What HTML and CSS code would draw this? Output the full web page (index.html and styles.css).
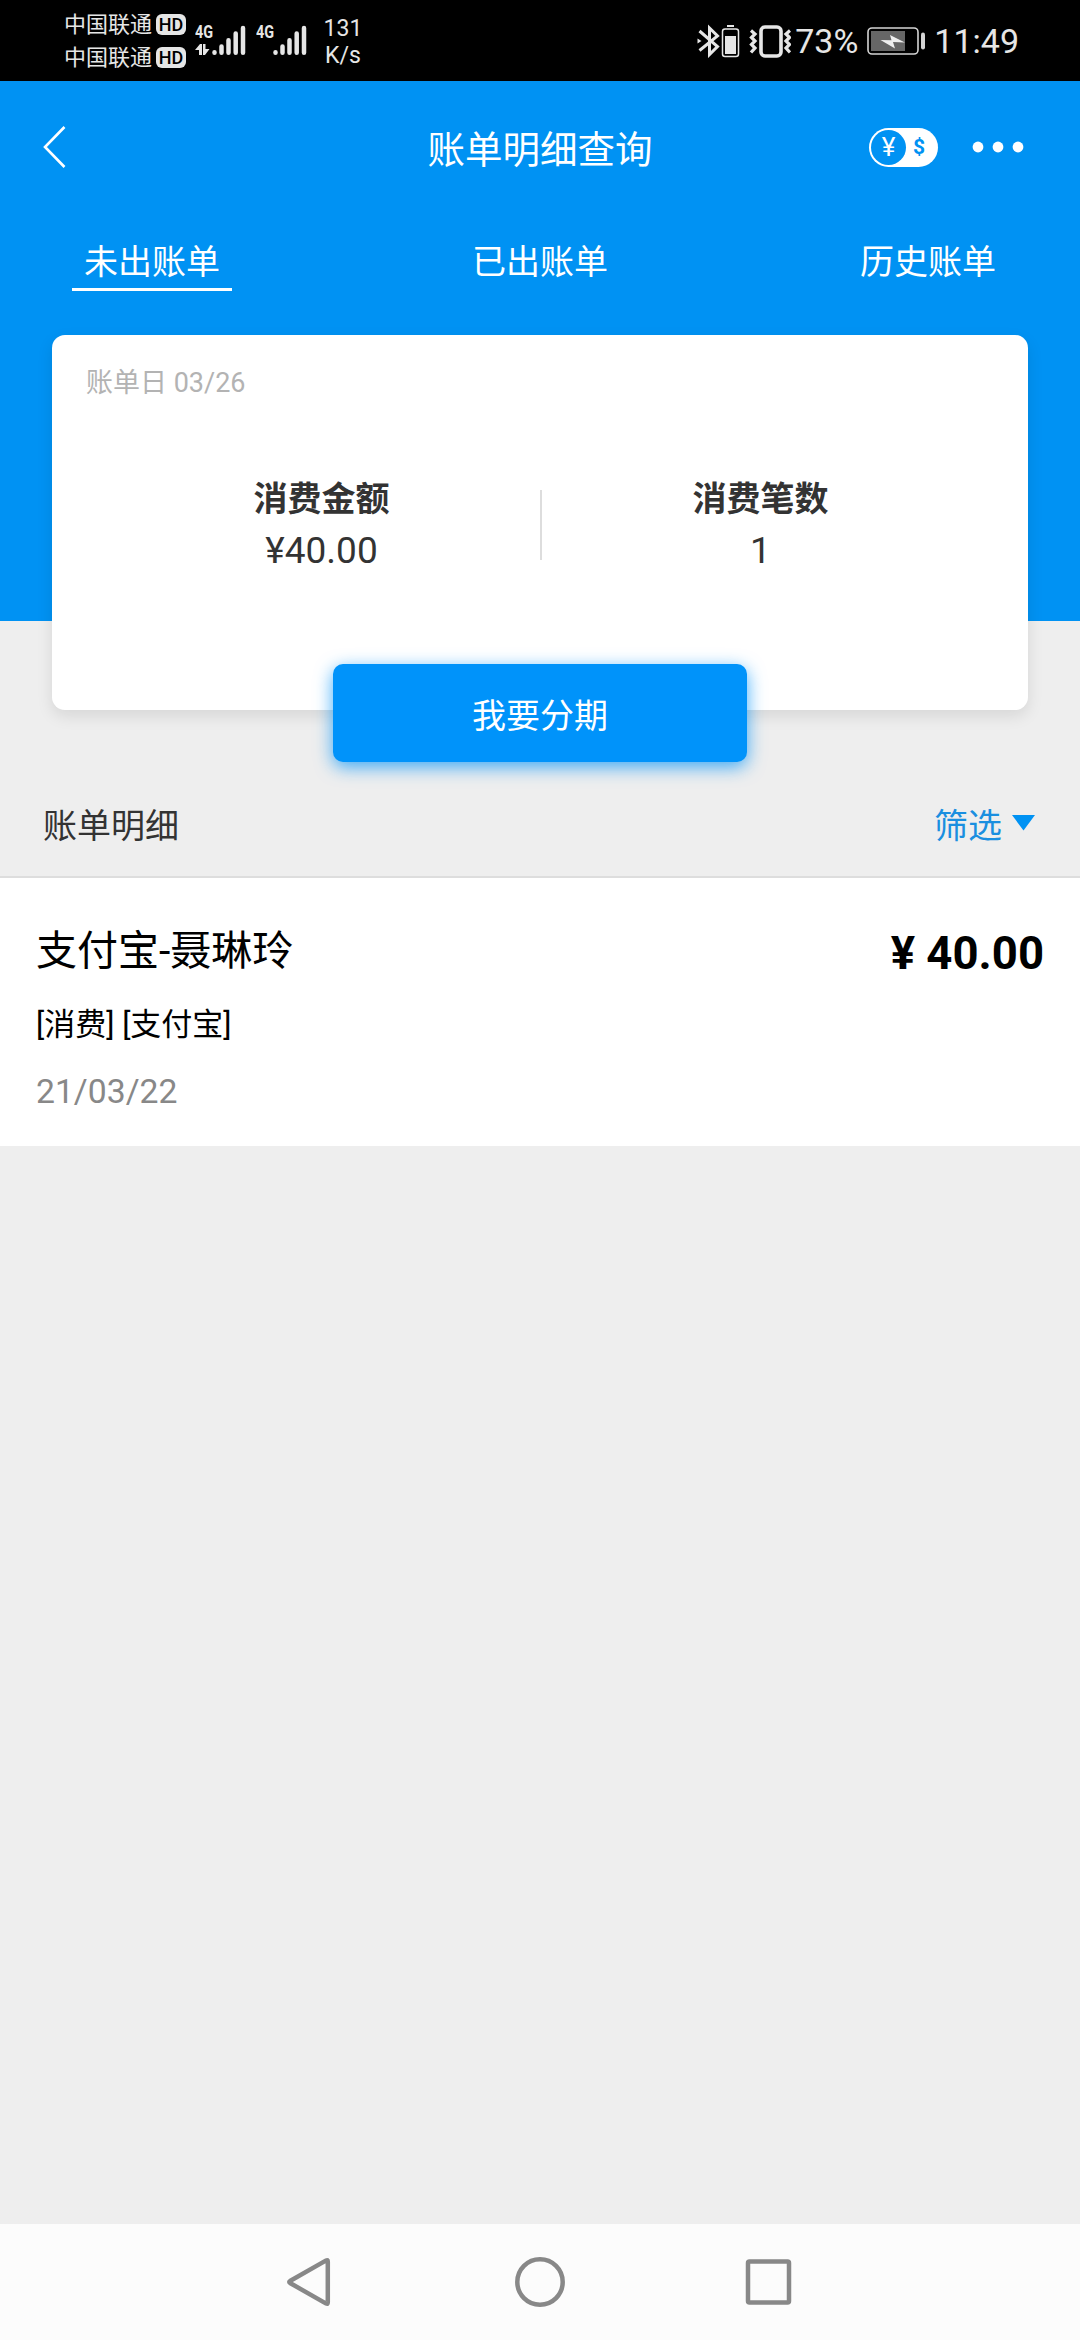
FILE: index.html
```html
<!DOCTYPE html>
<html lang="zh-CN">
<head>
<meta charset="utf-8">
<title>账单明细查询</title>
<link rel="stylesheet" href="styles.css">
</head>
<body>
<div class="screen">
  <div class="status">
    <div class="carriers">
      <div class="carrier"><span>中国联通</span><b class="hd">HD</b></div>
      <div class="carrier"><span>中国联通</span><b class="hd">HD</b></div>
    </div>
    <div class="signal">
      <span class="net">4G</span>
      <svg width="52" height="32" viewBox="0 0 52 32" fill="#e6e6e6" stroke="#e6e6e6"><path stroke="none" d="M0 26l5-6h2v11H4v-5zM8 20h2.500v5h4l-4.500 6H8z"/><path stroke-width="4.500" stroke-linecap="round" d="M19.500 28.300v.4M26.500 22.500v6.200M33.500 16.200v12.500M40.700 9.500v19.200M48 4v24.700"/></svg>
    </div>
    <div class="signal">
      <span class="net">4G</span>
      <svg width="52" height="32" viewBox="0 0 52 32" stroke="#e6e6e6"><path stroke-width="4.500" stroke-linecap="round" d="M19.500 28.300v.4M26.500 22.500v6.200M33.500 16.200v12.500M40.700 9.500v19.200M48 4v24.700"/></svg>
    </div>
    <div class="speed"><span>131</span><span>K/s</span></div>
    <div class="status-right">
      <svg width="94" height="34" viewBox="0 0 94 34" fill="none" stroke="#e6e6e6">
        <path stroke-width="3" d="M2.500 7l18 15.500-8 8V4l8 8-18 14.500"/><path fill="#e6e6e6" stroke="none" d="M.5 14.500l4 2.500-4 2.500z"/>
        <rect x="25.500" y="5" width="16" height="27.500" rx="2.500" stroke-width="1.500"/><path fill="#e6e6e6" stroke="none" d="M28 12h11v18H28zM30 1h7v2h-7z"/>
        <rect x="64" y="3" width="20" height="29" rx="4" stroke-width="3.600"/>
        <path stroke-width="3.200" d="M54 6.500l4 3.500-3.500 3.500 3.500 3.500-3.500 3.500 3.500 3.500-4 4.500M93 6.500l-4 3.500 3.500 3.500-3.500 3.500 3.500 3.500-3.500 3.500 4 4.500"/>
      </svg>
      <span class="pct">73%</span>
      <svg width="60" height="30" viewBox="0 0 60 30"><rect x="1" y="2" width="50" height="26" rx="4" fill="none" stroke="#d4d4d4" stroke-width="1.600"/><path fill="#666" d="M4 5h34v20H4z"/><path fill="#eee" d="M13.500 14l11 .2L23 9l15 7.500-12-.5 2 6.500z"/><rect x="54" y="6.500" width="4" height="17" rx="2" fill="#d4d4d4"/></svg>
      <span class="clock">11:49</span>
    </div>
  </div>

  <header class="hero">
    <div class="titlebar">
      <svg width="26" height="42" viewBox="0 0 26 42" fill="none" stroke="#fff" stroke-width="2.600"><path d="M22.500 1L3 21l19.500 20"/></svg>
      <h1>账单明细查询</h1>
      <div class="actions">
        <div class="currency"><span class="cny">¥</span><span class="usd">$</span></div>
        <svg width="52" height="12" viewBox="0 0 52 12" fill="#fff"><circle cx="6" cy="6" r="5.400"/><circle cx="26" cy="6" r="5.400"/><circle cx="46" cy="6" r="5.400"/></svg>
      </div>
    </div>
    <nav class="tabs">
      <a class="tab active">未出账单</a>
      <a class="tab">已出账单</a>
      <a class="tab">历史账单</a>
    </nav>
  </header>

  <section class="card">
    <p class="bill-day">账单日 03/26</p>
    <div class="stats">
      <div class="stat"><b>消费金额</b><span>¥40.00</span></div>
      <i class="divider"></i>
      <div class="stat"><b>消费笔数</b><span>1</span></div>
    </div>
  </section>
  <button class="installment">我要分期</button>

  <div class="list-head">
    <span>账单明细</span>
    <span class="filter">筛选<svg width="24" height="16" viewBox="0 0 24 16" fill="#0092f3"><path d="M0 0h23L11.500 15.500z"/></svg></span>
  </div>
  <article class="entry">
    <div class="entry-info">
      <h2>支付宝-聂琳玲</h2>
      <p class="kind">[消费] [支付宝]</p>
      <p class="date">21/03/22</p>
    </div>
    <strong class="amount">¥ 40.00</strong>
  </article>

  <footer class="navbar">
    <svg width="52" height="52" viewBox="0 0 52 52"><path d="M41.200 4.400q1.600-.8 1.600 1v41.200q0 1.800-1.600 1L5 27q-1.500-1 0-2z"/></svg>
    <svg width="52" height="52" viewBox="0 0 52 52"><circle cx="26" cy="26" r="22.700"/></svg>
    <svg width="52" height="52" viewBox="0 0 52 52"><rect x="5" y="5.500" width="41" height="41" rx="1.500"/></svg>
  </footer>
</div>
</body>
</html>
```
FILE: styles.css
```css
* { box-sizing: border-box; margin: 0; padding: 0; }
body {
  font-family: Roboto, "Noto Sans CJK SC", sans-serif;
  color: #333;
  background: #eee;
}
svg { display: block; flex: none; }
.screen {
  width: 1080px;
  height: 2340px;
  display: flex;
  flex-direction: column;
  overflow: hidden;
}

.status {
  height: 81px;
  padding: 0 61px 0 64px;
  display: flex;
  flex: none;
  background: #000;
  color: #e6e6e6;
  white-space: nowrap;
}
.carriers { padding-top: 8px; width: 131px; }
.carrier {
  display: flex;
  align-items: center;
  gap: 4px;
  height: 33px;
  font-size: 22px;
  line-height: 33px;
}
.hd {
  width: 30px;
  height: 21px;
  border-radius: 6px;
  background: #e6e6e6;
  color: #000;
  font-size: 18px;
  font-weight: 500;
  line-height: 21px;
  text-align: center;
}
.signal { width: 61px; padding-top: 24px; display: grid; }
.signal > * { grid-area: 1 / 1; }
.net {
  justify-self: start;
  font-size: 18px;
  font-weight: 700;
  line-height: 16px;
  transform: scaleX(.8);
  transform-origin: left;
}
.speed {
  width: 52px;
  padding-top: 15px;
  display: flex;
  flex-direction: column;
  align-items: center;
  font-size: 23px;
  line-height: 27px;
}
.status-right {
  margin-left: auto;
  display: flex;
  align-items: center;
  font-size: 34px;
}
.pct { margin: 0 9px 0 4px; }
.clock { margin-left: 7px; }

.hero {
  height: 540px;
  flex: none;
  background: #0092f3;
  color: #fff;
}
.titlebar {
  height: 132px;
  padding: 0 56px 0 42px;
  display: grid;
  grid-template-columns: 210px 1fr 196px;
  align-items: center;
}
.titlebar h1 {
  padding-top: 5px;
  font-size: 37.5px;
  font-weight: 400;
  line-height: 56px;
  text-align: center;
}
.actions {
  display: flex;
  align-items: center;
  justify-content: flex-end;
  gap: 34px;
}
.currency {
  width: 69px;
  height: 39px;
  padding: 2px;
  border-radius: 20px;
  background: #fff;
  color: #0092f3;
  display: flex;
  align-items: center;
  line-height: 35px;
  text-align: center;
}
.cny {
  width: 35px;
  height: 35px;
  border-radius: 50%;
  background: #0092f3;
  color: #fff;
  font-size: 26px;
}
.usd { width: 26px; font-size: 21px; font-weight: 700; }
.tabs {
  padding: 22px 72px 0;
  display: flex;
  justify-content: space-between;
}
.tab {
  width: 160px;
  height: 56px;
  padding-top: 2px;
  border-bottom: 3px solid transparent;
  font-size: 34px;
  line-height: 50px;
  text-align: center;
}
.tab.active { border-color: #fff; }

.card {
  height: 375px;
  flex: none;
  margin: -286px 52px 0;
  border-radius: 13px;
  background: #fff;
  box-shadow: 0 6px 16px rgba(0, 0, 0, .1);
}
.bill-day {
  padding: 28px 0 0 34px;
  color: #b3b3b3;
  font-size: 27px;
  line-height: 40px;
}
.stats { display: flex; align-items: center; padding: 71px 49px 0 51px; }
.stat {
  flex: 1;
  display: flex;
  flex-direction: column;
  align-items: center;
}
.stat b { font-size: 34px; line-height: 50px; }
.stat span { font-size: 37px; line-height: 52px; position: relative; top: 1px; }
.divider { width: 2px; height: 70px; background: #ddd; }
.installment {
  width: 414px;
  height: 98px;
  flex: none;
  margin: -46px auto 0;
  border: 0;
  border-radius: 10px;
  background: #0093fa;
  box-shadow: 0 5px 18px rgba(0, 147, 250, .75);
  color: #fff;
  font: inherit;
  font-size: 34px;
}

.list-head {
  height: 116px;
  flex: none;
  padding: 8px 44px 0 43px;
  border-bottom: 2px solid #ddd;
  display: flex;
  align-items: center;
  justify-content: space-between;
  font-size: 34px;
}
.filter {
  display: flex;
  align-items: center;
  gap: 10px;
  color: #1a8fe0;
}
.entry {
  height: 268px;
  flex: none;
  padding: 43px 36px 0;
  background: #fff;
  color: #000;
  display: flex;
  justify-content: space-between;
}
.entry h2 { font-size: 41px; font-weight: 400; line-height: 60px; }
.kind { margin-top: 21px; font-size: 31px; line-height: 46px; }
.date { margin-top: 21px; color: #888; font-size: 33.7px; line-height: 46px; }
.amount { font-size: 45.5px; line-height: 65px; }

.navbar {
  height: 116px;
  margin-top: auto;
  flex: none;
  padding: 0 285px;
  background: #fcfcfc;
  display: flex;
  align-items: center;
  justify-content: space-between;
}
.navbar svg {
  fill: none;
  stroke: #888;
  stroke-width: 4.5;
  stroke-linejoin: round;
}
```
